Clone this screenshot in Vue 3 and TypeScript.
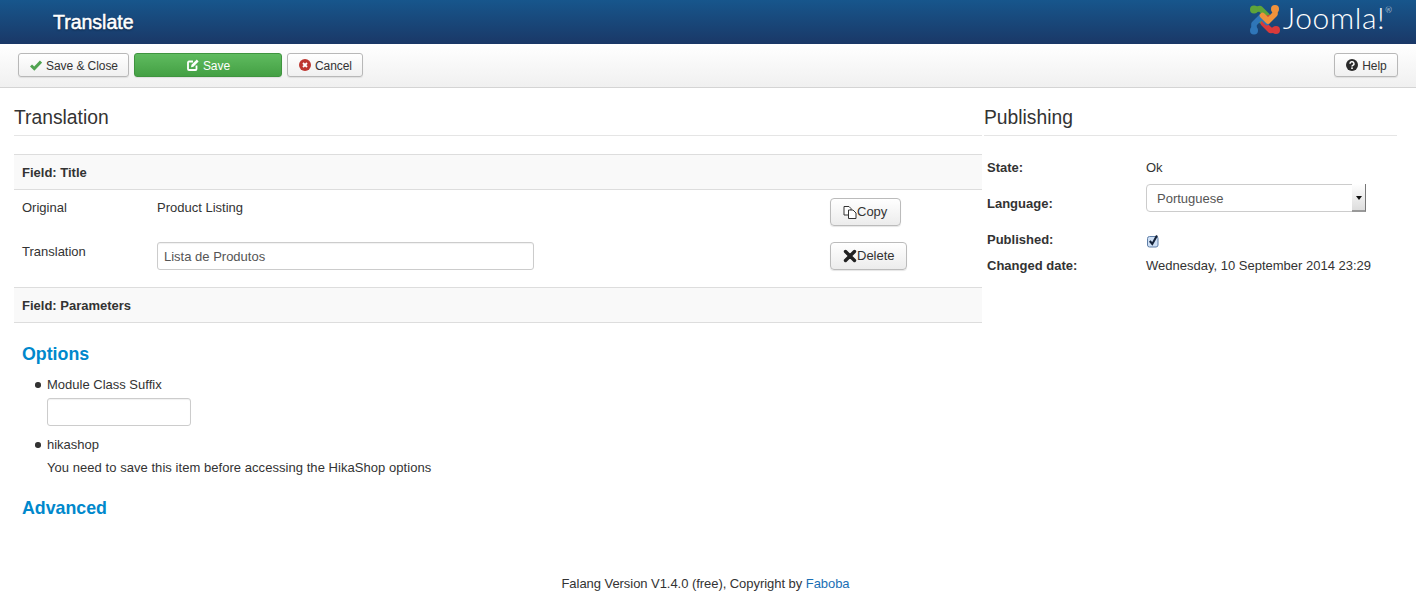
<script setup lang="ts">
const fieldRows = [
  { label: 'Original', value: 'Product Listing' },
]
</script>

<template>
  <div class="page">
    <header class="topbar">
      <h1 class="page-title">Translate</h1>
      <div class="brand">
        <svg class="brand-mark" viewBox="0 0 32 32" width="32" height="32" fill="none" stroke-width="5.6" stroke-linecap="round" stroke-linejoin="round">
          <path d="M5 7 L11 5.5 L18 12.5 L12.5 18" stroke="#5ea43a" />
          <path d="M27 27 L21.5 27.5 L14.5 20.5 L19.5 15" stroke="#d83a3a" />
          <path d="M5 27 L5 21 L12.5 13.5 L18 19.5" stroke="#2f76b8" />
          <path d="M26 6 L26 11 L19 18 L13.5 12.5" stroke="#f0923b" />
          <circle cx="5" cy="6.5" r="4" fill="#5ea43a" />
          <circle cx="26" cy="6" r="4" fill="#f0923b" />
          <circle cx="27" cy="27" r="4" fill="#d83a3a" />
          <circle cx="5" cy="27.5" r="4" fill="#2f76b8" />
        </svg>
        <span class="brand-name">Joomla!<sup class="brand-reg">®</sup></span>
      </div>
    </header>

    <nav class="toolbar">
      <div class="toolbar-group">
        <button class="tb-btn">
          <svg class="tb-icon" viewBox="0 0 12 12" width="12" height="12"><path d="M1 6.5 L4.3 9.6 L11 2.6" fill="none" stroke="#51a351" stroke-width="3" /></svg>
          Save &amp; Close
        </button>
        <button class="tb-btn tb-save">
          <svg class="tb-icon" viewBox="0 0 12 12" width="12" height="12"><path d="M9.5 6.5 V10 A1 1 0 0 1 8.5 11 H2 A1 1 0 0 1 1 10 V3.5 A1 1 0 0 1 2 2.5 H6" fill="none" stroke="#fff" stroke-width="1.8" /><path d="M4 8.2 L4.5 5.8 L9.8 0.6 L11.6 2.4 L6.4 7.7 Z" fill="#fff" /></svg>
          Save
        </button>
        <button class="tb-btn">
          <svg class="tb-icon" viewBox="0 0 12 12" width="12" height="12"><circle cx="6" cy="6" r="6" fill="#bd362f" /><path d="M4 4 L8 8 M8 4 L4 8" stroke="#fff" stroke-width="1.8" /></svg>
          Cancel
        </button>
      </div>
      <button class="tb-btn tb-help">
        <svg class="tb-icon" viewBox="0 0 12 12" width="12" height="12"><circle cx="6" cy="6" r="6" fill="#2b2b2b" /><path d="M4 4.7 A2 1.9 0 1 1 6.8 6.4 Q6 6.8 6 7.6" fill="none" stroke="#fff" stroke-width="1.5" /><rect x="5.2" y="8.4" width="1.6" height="1.6" fill="#fff" /></svg>
        Help
      </button>
    </nav>

    <main class="content">
      <section class="col-main">
        <h2 class="section-title">Translation</h2>

        <div class="field-head">Field: Title</div>
        <div class="field-row">
          <div class="row-label">{{ fieldRows[0].label }}</div>
          <div class="row-value">{{ fieldRows[0].value }}</div>
          <button class="act-btn act-copy">
            <svg viewBox="0 0 14 14" width="14" height="14" fill="#fff" stroke="#333" stroke-width="1"><path d="M1 1.5 H6 L8 3.5 V10 H1 Z" /><path d="M5.5 5 H10 L13 8 V13.5 H5.5 Z" /></svg>Copy
          </button>
        </div>
        <div class="field-row">
          <div class="row-label">Translation</div>
          <div class="row-value">
            <input class="text-input wide" type="text" value="Lista de Produtos" />
          </div>
          <button class="act-btn act-delete">
            <svg viewBox="0 0 14 14" width="14" height="14"><path d="M2.5 2.5 L11.5 11.5 M11.5 2.5 L2.5 11.5" stroke="#222" stroke-width="3.4" stroke-linecap="round" /></svg>Delete
          </button>
        </div>

        <div class="field-head second">Field: Parameters</div>

        <h3 class="group-title">Options</h3>
        <ul class="param-list">
          <li>
            <div class="param-label">Module Class Suffix</div>
            <input class="text-input narrow" type="text" />
          </li>
          <li>
            <div class="param-label">hikashop</div>
            <div class="param-note">You need to save this item before accessing the HikaShop options</div>
          </li>
        </ul>
        <h3 class="group-title advanced">Advanced</h3>
      </section>

      <aside class="col-side">
        <h2 class="section-title">Publishing</h2>
        <div class="pub-grid">
          <div class="pub-label">State:</div>
          <div class="pub-value">Ok</div>
          <div class="pub-label lang">Language:</div>
          <div class="select-box">
            <span>Portuguese</span>
            <span class="select-arrow"></span>
          </div>
          <div class="pub-label pubd">Published:</div>
          <div class="pub-value pubd">
            <svg viewBox="0 0 13 14" width="13" height="14">
              <rect x="1.5" y="2.5" width="10.5" height="10.5" rx="2" fill="#cfe0f5" stroke="#5f7fa8" />
              <path d="M3.8 7 L6.3 10 L11 1.5" fill="none" stroke="#15233a" stroke-width="2.1" />
            </svg>
          </div>
          <div class="pub-label">Changed date:</div>
          <div class="pub-value">Wednesday, 10 September 2014 23:29</div>
        </div>
      </aside>
    </main>

    <footer class="footer">Falang Version V1.4.0 (free), Copyright by <a class="footer-link" href="#">Faboba</a></footer>
  </div>
</template>

<style scoped>
.page {
  height: 603px;
  overflow: hidden;
  font-family: "Liberation Sans", Arial, sans-serif;
  font-size: 13px;
  line-height: 20px;
  color: #333;
  background: #fff;
  display: flex;
  flex-direction: column;
}
.topbar {
  height: 44px;
  flex: none;
  box-sizing: border-box;
  display: flex;
  align-items: center;
  justify-content: space-between;
  background: linear-gradient(#17568c, #1a3867);
  padding: 0 24px 0 53px;
}
.page-title {
  margin: 0;
  font-size: 19.5px;
  font-weight: 400;
  color: #fff;
  -webkit-text-stroke: 0.5px #fff;
  text-shadow: 0 1px 2px #0a1a33;
}
.brand {
  display: flex;
  align-items: center;
  gap: 2px;
}
.brand-mark {
  margin-bottom: 7px;
}
.brand-name {
  font-family: Lato, sans-serif;
  font-weight: 300;
  font-size: 30px;
  letter-spacing: 0.6px;
  line-height: 30px;
  color: #fff;
  margin-bottom: 10px;
}
.brand-reg {
  font-size: 8px;
  line-height: 0;
  letter-spacing: 0;
  vertical-align: 16px;
}
.toolbar {
  height: 44px;
  flex: none;
  box-sizing: border-box;
  display: flex;
  align-items: center;
  justify-content: space-between;
  padding: 0 18px 1px;
  background: linear-gradient(#fff, #f0f0f0);
  border-bottom: 1px solid #d4d4d4;
}
.toolbar-group {
  display: flex;
  gap: 5px;
}
.tb-btn {
  height: 24px;
  box-sizing: border-box;
  padding: 1px 10px 0 11px;
  display: inline-flex;
  align-items: center;
  justify-content: center;
  gap: 4px;
  font: 12px/16px "Liberation Sans", Arial, sans-serif;
  letter-spacing: -0.06px;
  color: #333;
  background: linear-gradient(#fff, #f0f0f0);
  border: 1px solid #b8b8b8;
  border-radius: 3px;
  box-shadow: 0 1px 1px rgba(0, 0, 0, 0.08);
}
.tb-icon {
  margin-top: -1px;
}
.tb-save {
  width: 148px;
  color: #fff;
  background: linear-gradient(#5fbb5f, #44a044);
  border-color: #3f943f;
}
.tb-help {
  width: 64px;
}
.content {
  flex: 1;
  display: flex;
  padding-left: 14px;
  padding-top: 16px;
  align-items: flex-start;
}
.col-main {
  width: 968px;
  flex: none;
}
.col-side {
  width: 413px;
  flex: none;
  margin-left: 2px;
}
.section-title {
  margin: 0;
  padding-top: 1px;
  font-size: 19.3px;
  font-weight: 400;
  line-height: 26px;
  height: 30px;
  box-sizing: content-box;
  border-bottom: 1px solid #e5e5e5;
  color: #333;
}
.field-head {
  margin-top: 18px;
  height: 36px;
  box-sizing: border-box;
  padding: 1px 0 0 8px;
  display: flex;
  align-items: center;
  font-weight: 700;
  background: #f9f9f9;
  border-top: 1px solid #ddd;
  border-bottom: 1px solid #ddd;
}
.field-head.second {
  margin-top: 9px;
}
.field-row {
  display: grid;
  grid-template-columns: 135px 673px auto;
  justify-content: start;
  padding: 8px 0 8px 8px;
  align-items: start;
}
.act-btn {
  height: 28px;
  box-sizing: border-box;
  padding: 0 0 0 12px;
  display: inline-flex;
  align-items: center;
  font: 13px/18px "Liberation Sans", Arial, sans-serif;
  color: #333;
  background: linear-gradient(#fff, #ececec);
  border: 1px solid #bbb;
  border-radius: 4px;
  box-shadow: 0 1px 1px rgba(0, 0, 0, 0.1);
}
.act-copy {
  width: 71px;
}
.act-delete {
  width: 77px;
}
.text-input {
  display: block;
  height: 28px;
  box-sizing: border-box;
  padding: 0 6px;
  font: 13px/18px "Liberation Sans", Arial, sans-serif;
  color: #555;
  background: #fff;
  border: 1px solid #ccc;
  border-radius: 3px;
  box-shadow: inset 0 1px 1px rgba(0, 0, 0, 0.06);
}
.text-input.wide {
  width: 377px;
}
.text-input.narrow {
  width: 144px;
}
.group-title {
  margin: 20px 0 0 8px;
  font-size: 17.8px;
  line-height: 22px;
  font-weight: 700;
  color: #0088cc;
}
.group-title.advanced {
  margin-top: 19px;
}
.param-list {
  margin: 10px 0 0;
  padding: 0 0 0 33px;
  list-style: none;
}
.param-list li {
  position: relative;
  margin-bottom: 9px;
}
.param-list li::before {
  content: "";
  position: absolute;
  left: -12px;
  top: 7px;
  width: 5.5px;
  height: 5.5px;
  border-radius: 50%;
  background: #333;
}
.param-label {
  margin-bottom: 3px;
}
.param-note {
  letter-spacing: 0.05px;
}
.pub-grid {
  display: grid;
  grid-template-columns: 159px auto;
  justify-content: start;
  padding: 22px 0 0 3px;
  align-items: start;
  row-gap: 6px;
}
.pub-label {
  font-weight: 700;
}
.pub-label.lang {
  margin-top: 10px;
}
.pub-label.pubd,
.pub-value.pubd {
  margin-top: 10px;
}
.pub-value.pubd svg {
  display: block;
  margin-top: 4px;
}
.select-box {
  position: relative;
  width: 220px;
  height: 28px;
  box-sizing: border-box;
  padding: 2px 10px 0;
  display: flex;
  align-items: center;
  color: #555;
  background: #fff;
  border: 1px solid #ccc;
  border-radius: 4px;
}
.select-arrow {
  position: absolute;
  right: -1px;
  top: -1px;
  bottom: -1px;
  width: 14px;
  box-sizing: border-box;
  border-right: 1px solid #777;
  border-bottom: 2px solid #999;
  background: linear-gradient(#fff, #ddd);
}
.select-arrow::after {
  content: "";
  position: absolute;
  left: 4px;
  top: 12px;
  border-left: 3px solid transparent;
  border-right: 3px solid transparent;
  border-top: 4px solid #111;
}
.footer {
  flex: none;
  height: 29px;
  box-sizing: border-box;
  text-align: center;
  padding-right: 5px;
  letter-spacing: -0.05px;
}
.footer-link {
  color: #1a6fb5;
  text-decoration: none;
}
</style>
